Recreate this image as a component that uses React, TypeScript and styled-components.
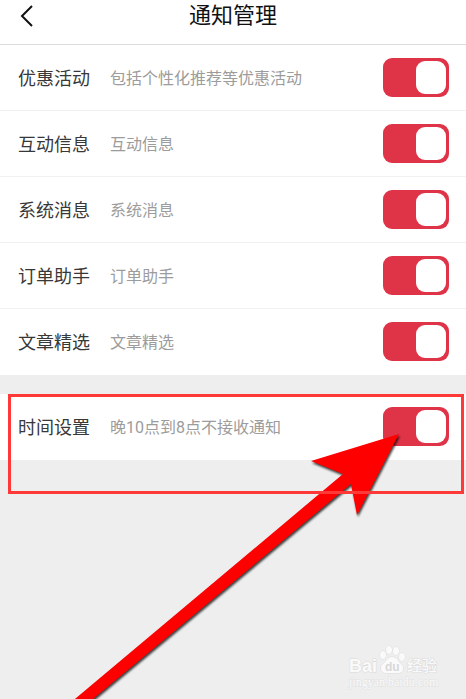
import React from "react";
import styled, { createGlobalStyle } from "styled-components";

const GlobalStyle = createGlobalStyle`
  * { box-sizing: border-box; }
  html, body, #root { height: 100%; }
  body {
    margin: 0;
    background: #eeeeee;
    font-family: Roboto, "Noto Sans CJK SC", sans-serif;
  }
`;

const Page = styled.div`
  position: relative;
  min-height: 100%;
  overflow: hidden;
`;

const Header = styled.header`
  display: grid;
  grid-template-columns: 56px 1fr 56px;
  align-items: center;
  height: 45px;
  padding-bottom: 12px;
  background: #ffffff;
  border-bottom: 1px solid #dddddd;
`;

const BackButton = styled.button`
  display: flex;
  align-items: center;
  height: 32px;
  padding: 0 0 0 18px;
  border: 0;
  background: none;
  color: #111111;
`;

const Title = styled.h1`
  margin: 0;
  font-size: 22px;
  line-height: 32px;
  font-weight: 400;
  text-align: center;
  color: #111111;
`;

const Group = styled.section<{ $spaced?: boolean }>`
  position: relative;
  margin-top: ${(p) => (p.$spaced ? "19px" : "0")};
`;

const Row = styled.label`
  display: flex;
  align-items: center;
  height: 66px;
  padding: 0 17px 0 18px;
  background: #ffffff;
  border-bottom: 1px solid #f1f1f1;

  &:last-of-type {
    border-bottom-color: #ffffff;
  }
`;

const Name = styled.span`
  flex: none;
  width: 92px;
  padding-top: 2px;
  font-size: 18px;
  line-height: 26px;
  color: #383838;
`;

const Description = styled.span`
  flex: 1;
  padding-top: 2px;
  font-size: 16px;
  line-height: 26px;
  color: #9c9c9c;
`;

const Switch = styled.input`
  appearance: none;
  display: flex;
  align-items: center;
  flex: none;
  width: 66px;
  height: 39px;
  margin: 0;
  padding: 0 3px;
  border-radius: 9px;
  background: #cccccc;

  &::before {
    content: "";
    width: 30px;
    height: 33px;
    border-radius: 9px;
    background: #ffffff;
  }

  &:checked {
    justify-content: flex-end;
    background: #df3348;
  }
`;

const Highlight = styled.div`
  position: absolute;
  z-index: 2;
  top: 0;
  left: 8px;
  right: 2px;
  height: 100px;
  border: 3px solid #ff3838;
  pointer-events: none;
`;

const Pointer = styled.svg`
  position: absolute;
  z-index: 1;
  top: 40px;
  right: 67px;
  width: 326px;
  height: 266px;
  overflow: visible;
  pointer-events: none;
  filter: drop-shadow(1px 2px 1px rgba(0, 0, 0, 0.75));
`;

const Watermark = styled.svg`
  position: absolute;
  right: 26px;
  bottom: 8px;
  width: 94px;
  height: 48px;
`;

const settings = [
  { name: "优惠活动", description: "包括个性化推荐等优惠活动" },
  { name: "互动信息", description: "互动信息" },
  { name: "系统消息", description: "系统消息" },
  { name: "订单助手", description: "订单助手" },
  { name: "文章精选", description: "文章精选" },
];

function SettingRow({ name, description }: { name: string; description: string }) {
  return (
    <Row>
      <Name>{name}</Name>
      <Description>{description}</Description>
      <Switch type="checkbox" role="switch" defaultChecked />
    </Row>
  );
}

export default function App() {
  return (
    <>
      <GlobalStyle />
      <Page>
        <Header>
          <BackButton type="button" aria-label="返回">
            <svg width="16" height="24" viewBox="0 0 16 24" fill="none" stroke="currentColor" strokeWidth="2">
              <path d="M14 2 4 12l10 10" />
            </svg>
          </BackButton>
          <Title>通知管理</Title>
        </Header>
        <Group>
          {settings.map((s) => (
            <SettingRow key={s.name} {...s} />
          ))}
        </Group>
        <Group $spaced>
          <SettingRow name="时间设置" description="晚10点到8点不接收通知" />
          <Pointer viewBox="73 434 326 266" aria-hidden="true">
            <path fill="#ff0000" d="M399 434 311 461l32 13L63 709l18 0L351 484l6 31z" />
          </Pointer>
          <Highlight />
        </Group>
        <Watermark viewBox="346 643 94 48" aria-hidden="true">
          <g fill="#fafafa" stroke="#dadada" strokeWidth="1" paintOrder="stroke">
            <text x="349" y="672" fontFamily="Liberation Sans, sans-serif" fontWeight="700" fontSize="18">Bai</text>
            <ellipse cx="383" cy="655" rx="3" ry="4" />
            <ellipse cx="389" cy="650" rx="3" ry="4" />
            <ellipse cx="396" cy="651" rx="3" ry="4" />
            <ellipse cx="402" cy="657" rx="3" ry="4" />
            <path d="M392 657c-5 0-5 4-9 7-4 3-2 9 3 9h12c6 0 7-6 3-9-3-3-4-7-9-7z" />
            <text x="407" y="671" fontFamily="Noto Sans CJK SC, sans-serif" fontWeight="500" fontSize="15">经验</text>
          </g>
          <text x="349" y="686" fill="#fafafa" stroke="#e2e2e2" strokeWidth="1" paintOrder="stroke" fontFamily="Liberation Serif, serif" fontSize="12">jingyan.baidu.com</text>
          <text x="385" y="671" fill="#d8d8d8" fontFamily="Liberation Sans, sans-serif" fontWeight="700" fontSize="12">du</text>
        </Watermark>
      </Page>
    </>
  );
}
